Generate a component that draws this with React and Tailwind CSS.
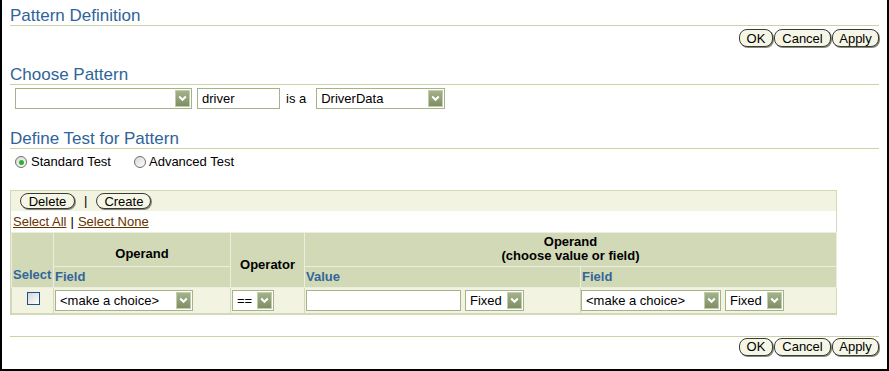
import React from "react";

function Heading({ children, className = "" }) {
  return (
    <div className={`h-[20px] border-b border-[#c9d3a5] text-[17px] leading-[19px] text-[#2f6399] ${className}`}>
      {children}
    </div>
  );
}

function Btn({ children, w, h = "h-[18px]" }) {
  return (
    <span
      className={`inline-flex ${h} ${w} items-center justify-center rounded-[8px] border border-[#3a3a3a] bg-[#f6f6e6] text-[13px] leading-none text-black shadow-[1px_1px_0_#8a8a7a]`}
    >
      {children}
    </span>
  );
}

function ButtonRow({ className = "" }) {
  return (
    <div className={`flex justify-end gap-[1px] ${className}`}>
      <Btn w="w-[34px]">OK</Btn>
      <Btn w="w-[57px]">Cancel</Btn>
      <Btn w="w-[47px]">Apply</Btn>
    </div>
  );
}

function Arrow() {
  return (
    <span className="flex h-[17px] w-[15px] shrink-0 items-center justify-center border border-[#c3cdac] bg-gradient-to-b from-[#a4b28b] to-[#7f8f64]">
      <svg width="9" height="7" viewBox="0 0 9 7">
        <path d="M1.2 1.5 L4.5 4.8 L7.8 1.5" stroke="white" strokeWidth="2" fill="none" />
      </svg>
    </span>
  );
}

function Select({ w, children }) {
  return (
    <div className={`flex h-[21px] ${w} shrink-0 items-center border border-[#a5b38b] bg-white pl-[4px] pr-[1px]`}>
      <span className="flex-1 truncate text-[13px] leading-none">{children}</span>
      <Arrow />
    </div>
  );
}

function Input({ w, children }) {
  return (
    <div className={`flex h-[21px] ${w} shrink-0 items-center border border-[#a5b38b] bg-white pl-[4px]`}>
      <span className="text-[13px] leading-none">{children}</span>
    </div>
  );
}

function Radio({ checked }) {
  return (
    <span className="flex h-[12px] w-[12px] items-center justify-center rounded-full border border-[#6f6f6f] bg-gradient-to-br from-[#d8d8d8] to-white">
      {checked && <span className="h-[5px] w-[5px] rounded-full bg-[#2fb12f]" />}
    </span>
  );
}

export default function App() {
  return (
    <div className="h-[371px] w-[889px] overflow-hidden border-b-2 border-l-2 border-r-2 border-black bg-white font-['Liberation_Sans',Arial,sans-serif] text-[13px] text-black">
      <div className="px-[8px] pt-[6px]">
        <Heading>Pattern Definition</Heading>
        <ButtonRow className="mt-[3px]" />

        <Heading className="mt-[18px]">Choose Pattern</Heading>
        <div className="ml-[5px] mt-[3px] flex items-center">
          <Select w="w-[177px]"></Select>
          <div className="ml-[5px]">
            <Input w="w-[83px]">driver</Input>
          </div>
          <span className="ml-[6px]">is a</span>
          <div className="ml-[10px]">
            <Select w="w-[129px]">DriverData</Select>
          </div>
        </div>

        <Heading className="mt-[20px]">Define Test for Pattern</Heading>
        <div className="ml-[5px] mt-[5px] flex h-[16px] items-center">
          <Radio checked />
          <span className="ml-[4px]">Standard Test</span>
          <span className="ml-[23px]">
            <Radio />
          </span>
          <span className="ml-[3px]">Advanced Test</span>
        </div>

        <div className="mt-[20px] w-[827px] border border-[#d2d9b7]">
          <div className="flex h-[20px] items-center bg-[#f3f3e2] pl-[9px]">
            <Btn w="w-[55px]" h="h-[16px]">Delete</Btn>
            <span className="ml-[9px] mr-[9px]">|</span>
            <Btn w="w-[55px]" h="h-[16px]">Create</Btn>
          </div>
          <div className="flex h-[21px] items-center pl-[2px] text-[13px]">
            <span className="text-[#663300] underline">Select All</span>
            <span className="mx-[4px]">|</span>
            <span className="text-[#663300] underline">Select None</span>
          </div>
          <table className="w-[825px] table-fixed border-collapse text-[13px]">
            <colgroup>
              <col className="w-[42px]" />
              <col className="w-[177px]" />
              <col className="w-[74px]" />
              <col className="w-[276px]" />
              <col className="w-[256px]" />
            </colgroup>
            <thead>
              <tr className="h-[34px] bg-[#d2d9b7]">
                <th rowSpan={2} className="border border-[#eceedd] px-[1px] pb-[2px] text-left align-bottom font-bold text-[#336699]">
                  Select
                </th>
                <th className="border border-[#eceedd] pb-[3px] text-center align-bottom font-bold">Operand</th>
                <th rowSpan={2} className="border border-[#eceedd] pb-[12px] text-center align-bottom font-bold">
                  Operator
                </th>
                <th colSpan={2} className="border border-[#eceedd] pb-[3px] text-center align-bottom font-bold leading-[14px]">
                  Operand
                  <br />
                  (choose value or field)
                </th>
              </tr>
              <tr className="h-[20px] bg-[#d2d9b7]">
                <th className="border border-[#eceedd] px-[1px] text-left font-bold text-[#336699]">Field</th>
                <th className="border border-[#eceedd] px-[1px] text-left font-bold text-[#336699]">Value</th>
                <th className="border border-[#eceedd] px-[1px] text-left font-bold text-[#336699]">Field</th>
              </tr>
            </thead>
            <tbody>
              <tr className="h-[26px] bg-[#f3f3e2]">
                <td className="border border-[#d2d9b7] text-center align-middle">
                  <span className="ml-[2px] inline-block h-[13px] w-[13px] translate-y-[1px] border border-[#1e4f86] bg-gradient-to-br from-[#d6d6d6] to-white" />
                </td>
                <td className="border border-[#d2d9b7] pl-[1px]">
                  <Select w="w-[138px]">&lt;make a choice&gt;</Select>
                </td>
                <td className="border border-[#d2d9b7] pl-[1px]">
                  <Select w="w-[42px]">==</Select>
                </td>
                <td className="border border-[#d2d9b7] pl-[1px]">
                  <div className="flex items-center gap-[4px]">
                    <Input w="w-[155px]"></Input>
                    <Select w="w-[59px]">Fixed</Select>
                  </div>
                </td>
                <td className="border border-[#d2d9b7] pl-0">
                  <div className="flex items-center gap-[4px]">
                    <Select w="w-[140px]">&lt;make a choice&gt;</Select>
                    <Select w="w-[59px]">Fixed</Select>
                  </div>
                </td>
              </tr>
            </tbody>
          </table>
        </div>

        <div className="mt-[21px] border-t border-[#c9d3a5]" />
        <ButtonRow className="mt-[1px]" />
      </div>
    </div>
  );
}
